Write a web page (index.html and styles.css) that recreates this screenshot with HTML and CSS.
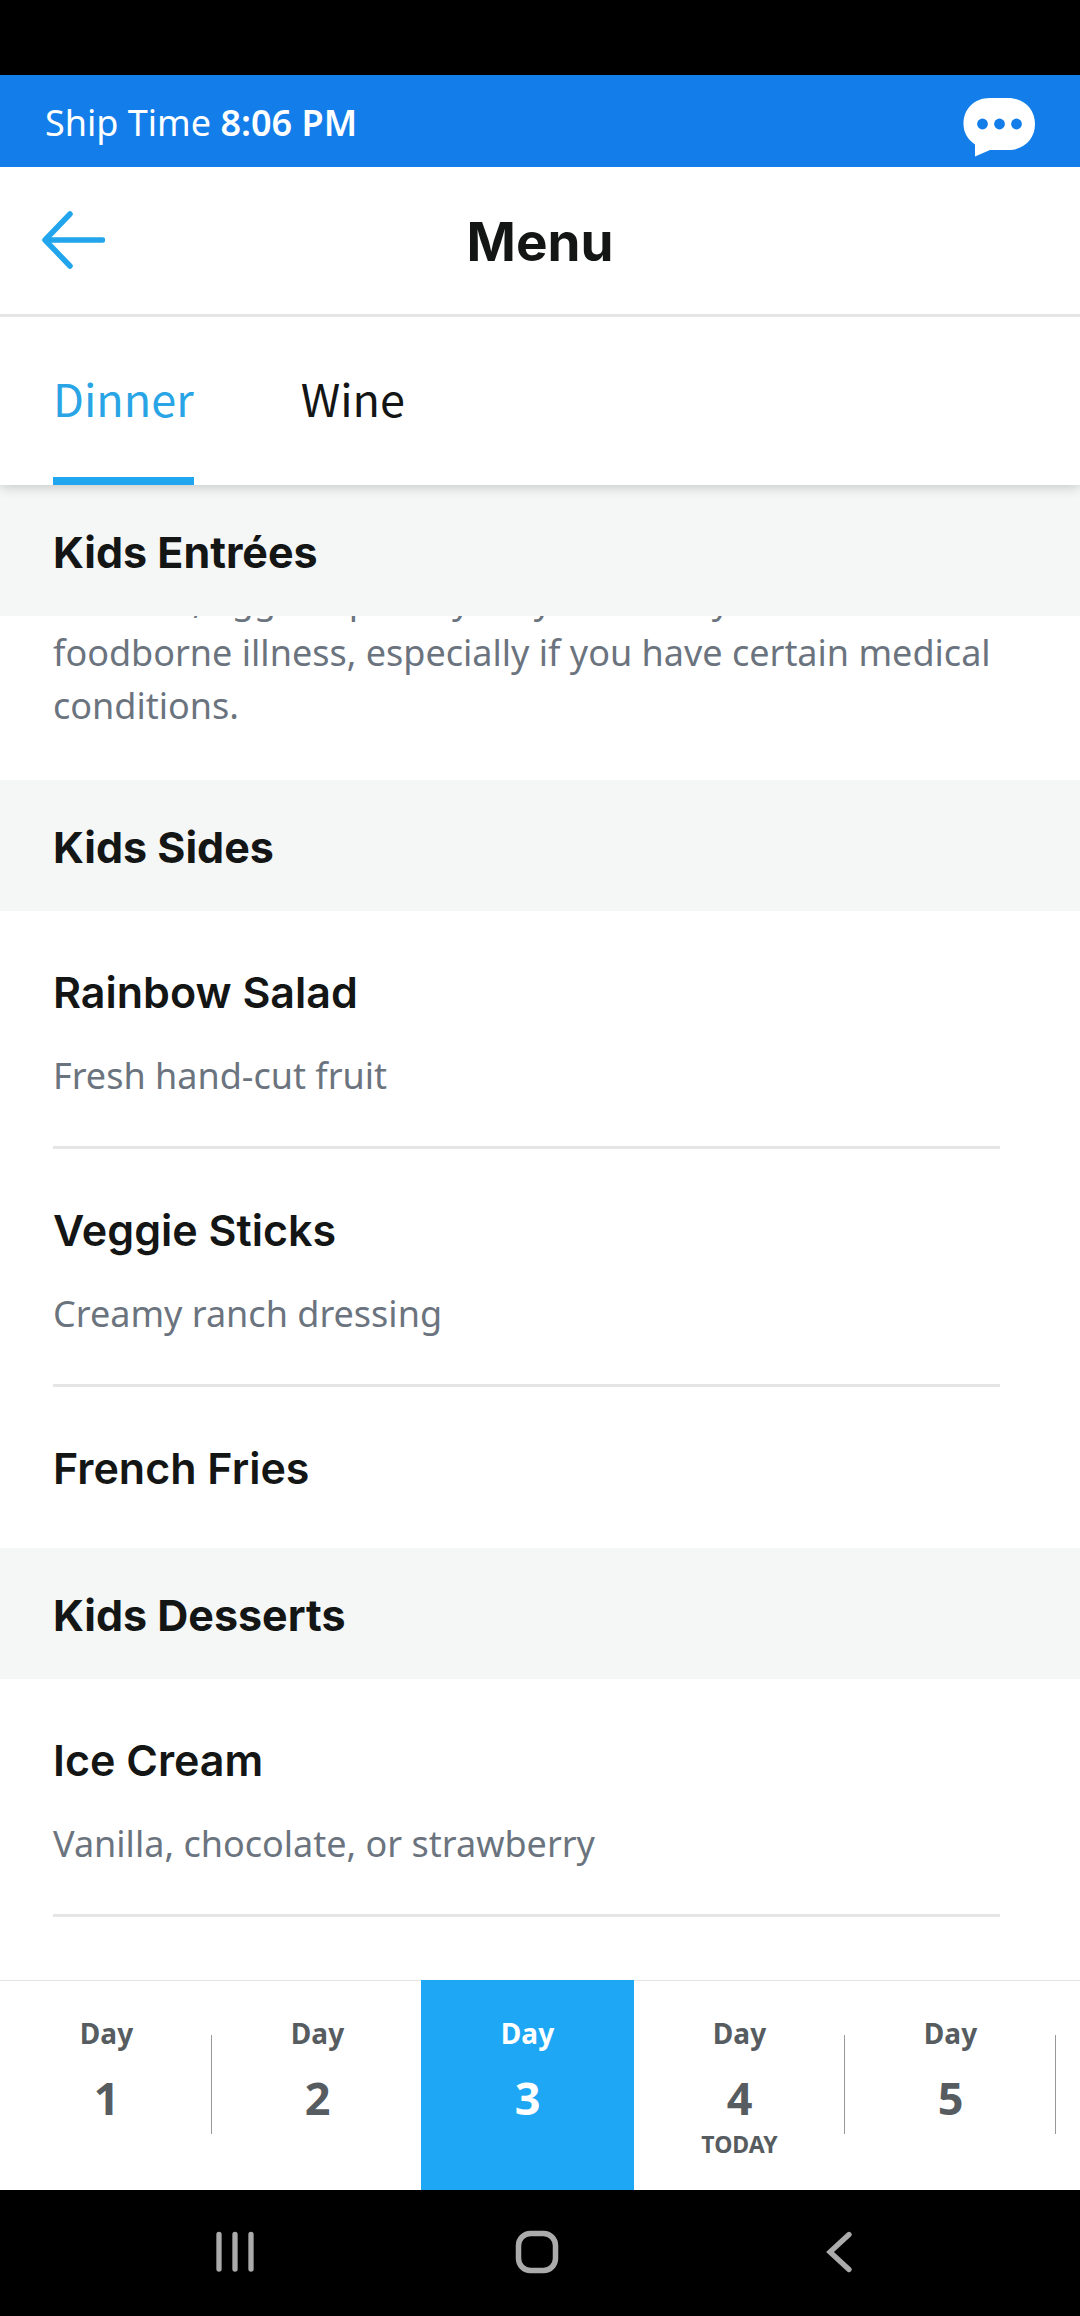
FILE: index.html
```html
<!DOCTYPE html>
<html lang="en">
<head>
<meta charset="utf-8">
<meta name="viewport" content="width=device-width">
<title>Menu</title>
<link rel="stylesheet" href="styles.css">
</head>
<body>
<div class="ship-bar">
  <p class="ship-time">Ship Time <strong>8:06 PM</strong></p>
  <button class="icon-button" type="button" aria-label="Chat">
    <svg width="72" height="60" viewBox="0 0 72 60">
      <path fill="#fff" d="M27 1H45C61 1 72 12 72 27C72 42 61 53 45 53H27L12 59.500V47.500C5 42.500 .5 36 .5 27C.5 12 11 1 27 1Z"/>
      <g fill="#137ee9"><circle cx="19.500" cy="27" r="5.400"/><circle cx="36.500" cy="27" r="5.400"/><circle cx="53.500" cy="27" r="5.400"/></g>
    </svg>
  </button>
</div>

<header class="title-bar">
  <button class="icon-button" type="button" aria-label="Back">
    <svg width="64" height="60" viewBox="0 0 64 60" fill="none" stroke="#22a5ec" stroke-width="5.500" stroke-linecap="round" stroke-linejoin="round">
      <path d="M29 3L4 29L29 55M5 29H61.500"/>
    </svg>
  </button>
  <h1 class="title">Menu</h1>
</header>

<nav class="tabs" aria-label="Menu type">
  <button class="tab tab-active" type="button">Dinner</button>
  <button class="tab" type="button">Wine</button>
</nav>

<main class="menu">
  <section>
    <h2 class="section-title section-title-pinned">Kids Entrées</h2>
    <p class="note">shellfish, eggs or poultry may increase your risk of foodborne illness, especially if you have certain medical conditions.</p>
  </section>
  <section>
    <h2 class="section-title">Kids Sides</h2>
    <ul class="dishes">
      <li class="dish"><h3 class="dish-name">Rainbow Salad</h3><p class="dish-text">Fresh hand-cut fruit</p></li>
      <li class="dish"><h3 class="dish-name">Veggie Sticks</h3><p class="dish-text">Creamy ranch dressing</p></li>
      <li class="dish dish-last"><h3 class="dish-name">French Fries</h3></li>
    </ul>
  </section>
  <section>
    <h2 class="section-title">Kids Desserts</h2>
    <ul class="dishes">
      <li class="dish"><h3 class="dish-name">Ice Cream</h3><p class="dish-text">Vanilla, chocolate, or strawberry</p></li>
    </ul>
  </section>
</main>

<nav class="days" aria-label="Days">
  <button class="day day-divided" type="button"><span class="day-label">Day</span><span class="day-number">1</span></button>
  <button class="day" type="button"><span class="day-label">Day</span><span class="day-number">2</span></button>
  <button class="day day-active" type="button"><span class="day-label">Day</span><span class="day-number">3</span></button>
  <button class="day day-divided" type="button"><span class="day-label">Day</span><span class="day-number">4</span><span class="day-today">TODAY</span></button>
  <button class="day day-divided" type="button"><span class="day-label">Day</span><span class="day-number">5</span></button>
</nav>

<nav class="system-bar" aria-label="System">
  <button class="icon-button" type="button" aria-label="Recent apps">
    <svg width="44" height="44" viewBox="0 0 44 44" stroke="#ababab" stroke-width="5.300" stroke-linecap="round"><path d="M6 4.500V39M22 4.500V39M38 4.500V39"/></svg>
  </button>
  <button class="icon-button" type="button" aria-label="Home">
    <svg width="44" height="44" viewBox="0 0 44 44" fill="none" stroke="#ababab" stroke-width="5.500"><rect x="3.500" y="3.500" width="37" height="37" rx="12"/></svg>
  </button>
  <button class="icon-button" type="button" aria-label="Back">
    <svg width="44" height="44" viewBox="0 0 44 44" fill="none" stroke="#ababab" stroke-width="5.300" stroke-linecap="round"><path d="M32 4.500L13 22L32 39.500"/></svg>
  </button>
</nav>
</body>
</html>
```
FILE: styles.css
```css
* { box-sizing: border-box; }

body {
  display: flex;
  flex-direction: column;
  min-height: 100vh;
  margin: 0;
  border-top: 75px solid #000;
  background: #fff;
  color: #141515;
  font-family: "Noto Sans", "Open Sans", sans-serif;
}

h1, h2, h3, p, ul { margin: 0; padding: 0; }
h1, h2, h3 { font-family: "Inter", "Noto Sans", sans-serif; }
ul { list-style: none; }

button {
  margin: 0;
  padding: 0;
  border: 0;
  background: none;
  color: inherit;
  font: inherit;
}

svg { display: block; }

.ship-bar {
  display: flex;
  align-items: center;
  justify-content: space-between;
  height: 92px;
  padding: 11px 45px 0;
  background: #137ee9;
  color: #fff;
}

.ship-time {
  padding-bottom: 8px;
  font-size: 36px;
  line-height: 52px;
}
.ship-time strong { font-weight: 600; }

.title-bar {
  position: relative;
  z-index: 3;
  display: grid;
  grid-template-columns: 1fr auto 1fr;
  align-items: center;
  justify-items: start;
  height: 150px;
  padding: 0 41px;
  border-bottom: 3px solid #e5e5e5;
  background: #fff;
}

.title {
  padding-top: 3px;
  font-size: 53px;
  font-weight: 700;
  line-height: 64px;
}

.tabs {
  display: flex;
  gap: 107px;
  padding: 0 53px;
  position: relative;
  z-index: 2;
  background: #fff;
  box-shadow: 0 2px 12px rgba(0, 0, 0, 0.2);
}

.tab {
  padding: 49px 0 47px;
  border-bottom: 8px solid transparent;
  font-family: "Noto Sans CJK JP", sans-serif;
  font-size: 45px;
  line-height: 64px;
}
.tab-active {
  border-color: #20a6ee;
  color: #29a5e6;
}

.menu { flex: 1; }

.section-title {
  padding: 41px 53px 38px;
  background: #f5f7f7;
  font-size: 43px;
  font-weight: 700;
  line-height: 52px;
}
.section-title-pinned {
  position: relative;
  z-index: 1;
}

/* The note has scrolled partly under the pinned heading. */
.note {
  margin-top: -43px;
  padding: 0 78px 48px 53px;
}

.note, .dish-text {
  color: #6b747e;
  font-size: 36px;
  line-height: 53px;
}

.dishes { padding: 0 80px 0 53px; }

.dish {
  display: flex;
  flex-direction: column;
  gap: 31px;
  padding: 55px 0 44px;
  border-bottom: 3px solid #e5e5e5;
}
.dish-last {
  padding-bottom: 54px;
  border-bottom: 0;
}

.dish-name {
  font-size: 43px;
  font-weight: 600;
  line-height: 52px;
}

.days {
  display: flex;
  height: 210px;
  padding-left: 1px;
  overflow: hidden;
  background: linear-gradient(#e3e5e5 1px, #fff 1px);
}

.day {
  display: flex;
  flex: 0 0 211px;
  flex-direction: column;
  align-items: center;
  padding-top: 35px;
  color: #565c5f;
  font-weight: 700;
}
.day-divided {
  background: linear-gradient(#96999b, #96999b) right 0 top 55px / 1px 99px no-repeat;
}
.day-active {
  flex-basis: 213px;
  margin-left: -2px;
  background: #1da7f4;
  color: #fff;
}

.day-label {
  margin-bottom: 20px;
  font-size: 28px;
  line-height: 36px;
}
.day-number {
  margin-bottom: 5px;
  font-size: 45px;
  line-height: 54px;
}
.day-today {
  font-size: 23px;
  line-height: 28px;
}

.system-bar {
  display: grid;
  grid-template-columns: repeat(3, 1fr);
  align-items: center;
  justify-items: center;
  height: 126px;
  padding: 0 90px 2px 84px;
  background: #000;
}
```
